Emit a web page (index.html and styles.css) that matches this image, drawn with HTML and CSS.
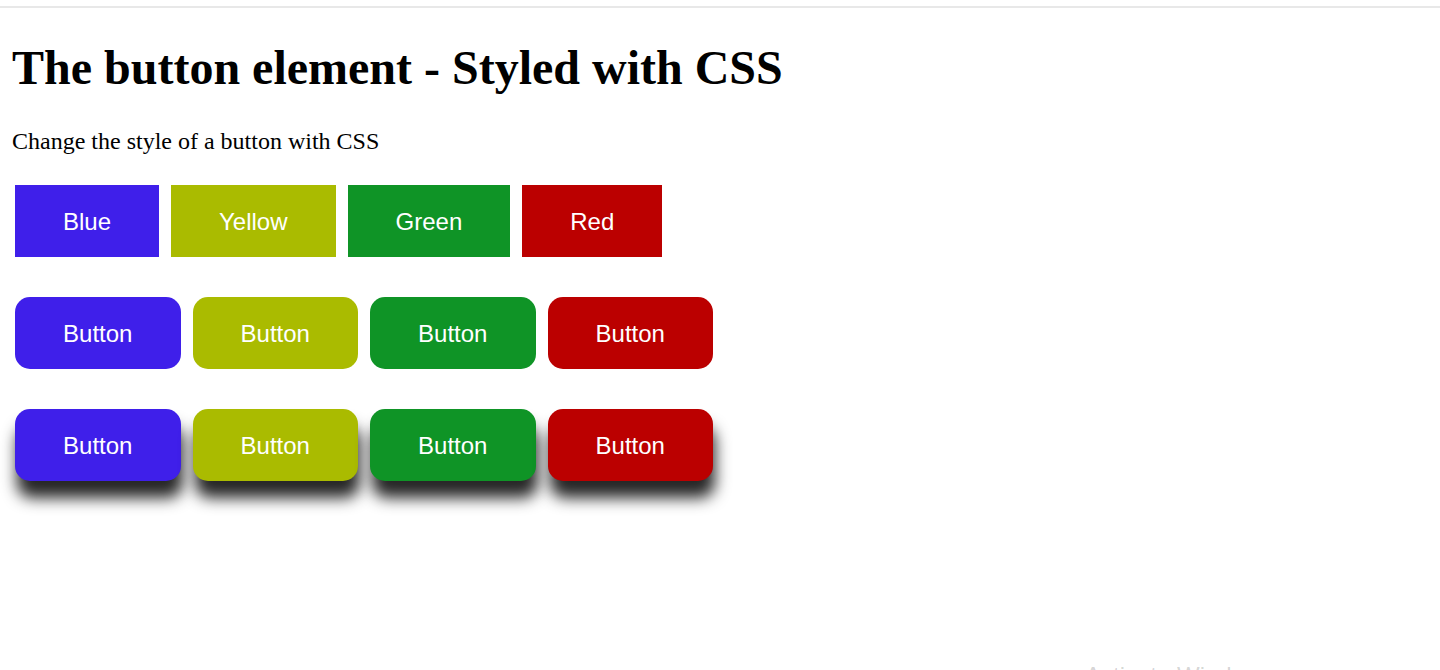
FILE: index.html
```html
<!DOCTYPE html>
<html>
<head>
<meta charset="utf-8">
<title>Buttons</title>
<link rel="stylesheet" href="styles.css">
</head>
<body>
<div class="topbar"></div>
<main class="page">
  <h1 class="title">The button element - Styled with CSS</h1>
  <p class="intro">Change the style of a button with CSS</p>
  <div class="rows">
    <div class="row">
      <button class="btn blue">Blue</button>
      <button class="btn yellow">Yellow</button>
      <button class="btn green">Green</button>
      <button class="btn red">Red</button>
    </div>
    <div class="row">
      <button class="btn blue round">Button</button>
      <button class="btn yellow round">Button</button>
      <button class="btn green round">Button</button>
      <button class="btn red round">Button</button>
    </div>
    <div class="row">
      <button class="btn blue round shadow">Button</button>
      <button class="btn yellow round shadow">Button</button>
      <button class="btn green round shadow">Button</button>
      <button class="btn red round shadow">Button</button>
    </div>
  </div>
</main>
<div class="watermark">Activate Windows</div>
</body>
</html>
```

FILE: styles.css
```css
html, body {
  margin: 0;
  padding: 0;
  background: #ffffff;
  height: 670px;
  overflow: hidden;
}
body {
  font-family: "Liberation Serif", "Times New Roman", serif;
  color: #000;
  position: relative;
}
.topbar {
  height: 6px;
  border-bottom: 2px solid #e8e8e8;
}
.page {
  padding: 32px 12px 0 12px;
}
.title {
  margin: 0 0 32px 0;
  font-size: 48px;
  font-weight: bold;
  line-height: 55px;
}
.intro {
  margin: 0;
  font-size: 24px;
  line-height: 28px;
}
.rows {
  display: flex;
  flex-direction: column;
  gap: 40px;
  padding: 30px 3px 0 3px;
}
.row {
  display: flex;
  gap: 12px;
}
.btn {
  border: none;
  color: #ffffff;
  font-family: "Liberation Sans", Arial, sans-serif;
  font-size: 24px;
  line-height: 27px;
  padding: 22.5px 48px;
  margin: 0;
  text-align: center;
  cursor: pointer;
}
.blue { background: #3f1fea; }
.yellow { background: #aabb00; }
.green { background: #0f9426; }
.red { background: #bb0000; }
.round {
  border-radius: 15px;
  width: 165.5px;
  padding-left: 0;
  padding-right: 0;
}
.shadow {
  box-shadow: 2px 17px 15px rgba(0, 0, 0, 0.85);
}
.watermark {
  position: absolute;
  left: 1085px;
  top: 662px;
  font-family: "Liberation Sans", Arial, sans-serif;
  font-size: 24px;
  color: rgba(0, 0, 0, 0.18);
  white-space: nowrap;
}
```
